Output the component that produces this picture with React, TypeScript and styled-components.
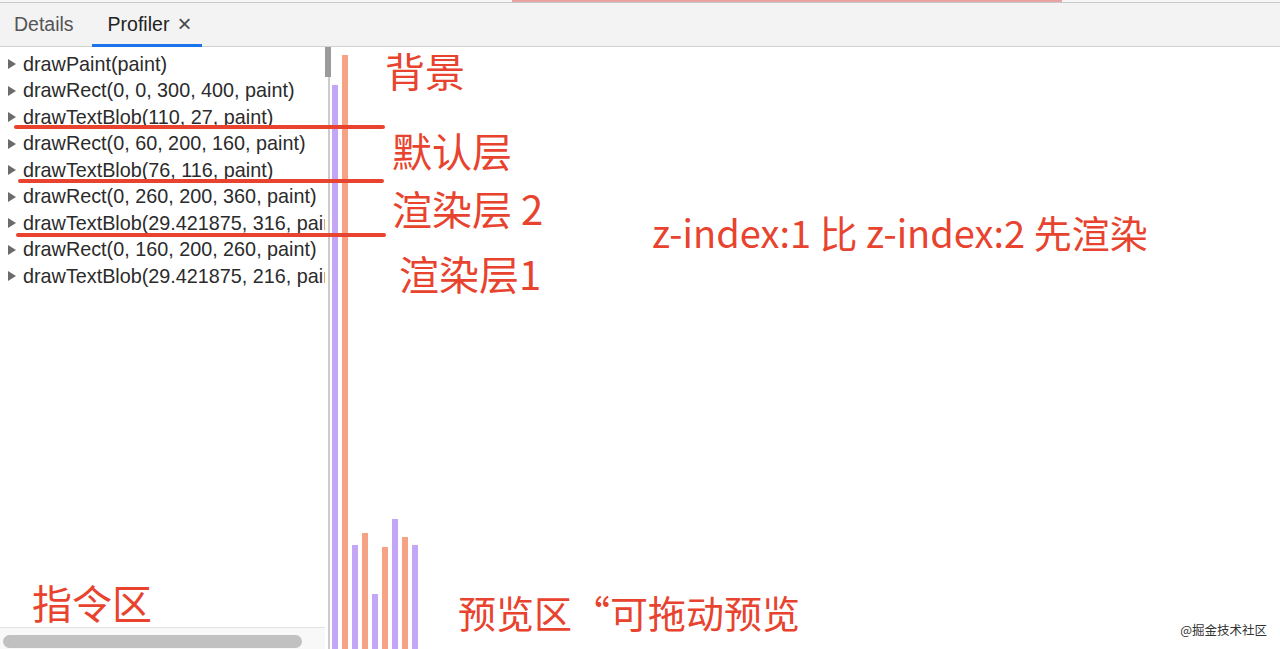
import React from 'react';
import { styled, createGlobalStyle } from 'styled-components';

const GlobalStyle = createGlobalStyle`
  html, body {
    margin: 0;
    padding: 0;
    background: #ffffff;
    overflow: hidden;
  }
  body {
    font-family: 'Liberation Sans', Arial, sans-serif;
  }
`;

const Page = styled.div`
  position: relative;
  width: 1280px;
  height: 649px;
  display: flex;
  flex-direction: column;
  overflow: hidden;
  background: #ffffff;
`;

const TopStrip = styled.div`
  height: 2px;
  display: flex;
  background: #f6f6f6;
  border-bottom: 1px solid #c8c8c8;
  padding-left: 512px;
`;

const TopStripAccent = styled.div`
  width: 550px;
  background: #e9a3a3;
`;

const TabBar = styled.div`
  height: 43px;
  display: flex;
  align-items: stretch;
  background: #f3f3f3;
  border-bottom: 1px solid #cfd1d4;
`;

const Tab = styled.div<{ $active?: boolean }>`
  display: flex;
  align-items: center;
  gap: 8px;
  padding-top: 2px;
  padding-left: ${(p) => (p.$active ? '16px' : '14px')};
  padding-right: ${(p) => (p.$active ? '11px' : '18px')};
  font-size: 19.5px;
  color: ${(p) => (p.$active ? '#222' : '#555')};
  border-bottom: 3px solid ${(p) => (p.$active ? '#1a73e8' : 'transparent')};
  margin-bottom: -1px;
`;

const Close = styled.span`
  font-size: 24px;
  color: #4a4a4a;
  line-height: 1;
  margin-top: -2px;
`;

const Body = styled.div`
  flex: 1;
  display: flex;
  min-height: 0;
`;

const LeftPanel = styled.div`
  width: 325px;
  display: flex;
  flex-direction: column;
  overflow: hidden;
`;

const CommandList = styled.div`
  flex: 1;
  padding-top: 4px;
  overflow: hidden;
`;

const Row = styled.div`
  height: 26.5px;
  display: flex;
  align-items: center;
  white-space: nowrap;
  overflow: hidden;
  font-size: 19.8px;
  color: #2b2b2b;
`;

const Caret = styled.span`
  width: 0;
  height: 0;
  margin: 0 7px 0 8px;
  border-top: 5.5px solid transparent;
  border-bottom: 5.5px solid transparent;
  border-left: 8px solid #6b6b6b;
  flex-shrink: 0;
`;

const HScroll = styled.div`
  height: 20px;
  border-top: 1px solid #e3e3e3;
  background: #f8f8f8;
  display: flex;
  align-items: flex-end;
  padding: 0 0 1px 3px;
`;

const HThumb = styled.div`
  width: 299px;
  height: 13px;
  border-radius: 7px;
  background: #c1c1c1;
`;

const VScroll = styled.div`
  width: 7px;
  display: flex;
  flex-direction: column;
  align-items: flex-start;
`;

const VThumb = styled.div`
  width: 6px;
  height: 30px;
  background: #9b9b9b;
`;

const VTrack = styled.div`
  flex: 1;
  width: 2px;
  margin-left: 3px;
  background: #cccccc;
`;

const Preview = styled.div`
  flex: 1;
  display: flex;
  align-items: flex-end;
  gap: 4px;
`;

const Bar = styled.div<{ $kind: 'a' | 'b' }>`
  width: 6px;
  background: ${(p) => (p.$kind === 'a' ? '#c4a6f6' : '#f5a384')};
`;

const Note = styled.div<{ $x: number; $y: number; $size?: number }>`
  position: absolute;
  left: ${(p) => p.$x}px;
  top: ${(p) => p.$y}px;
  font-family: 'Noto Sans CJK SC', 'Noto Sans', sans-serif;
  font-size: ${(p) => p.$size ?? 40}px;
  line-height: 1;
  color: #e8432e;
  white-space: nowrap;
`;

const Mark = styled.div<{ $x: number; $y: number; $w: number }>`
  position: absolute;
  left: ${(p) => p.$x}px;
  top: ${(p) => p.$y}px;
  width: ${(p) => p.$w}px;
  height: 4px;
  border-radius: 2px;
  background: #e8432e;
`;

const Watermark = styled.div`
  position: absolute;
  right: 13px;
  bottom: 10px;
  font-family: 'Noto Sans CJK SC', sans-serif;
  font-size: 12.5px;
  color: #333;
`;

const commands = [
  'drawPaint(paint)',
  'drawRect(0, 0, 300, 400, paint)',
  'drawTextBlob(110, 27, paint)',
  'drawRect(0, 60, 200, 160, paint)',
  'drawTextBlob(76, 116, paint)',
  'drawRect(0, 260, 200, 360, paint)',
  'drawTextBlob(29.421875, 316, paint)',
  'drawRect(0, 160, 200, 260, paint)',
  'drawTextBlob(29.421875, 216, paint)',
];

const bars: { kind: 'a' | 'b'; height: number }[] = [
  { kind: 'a', height: 564 },
  { kind: 'b', height: 594 },
  { kind: 'a', height: 104 },
  { kind: 'b', height: 116 },
  { kind: 'a', height: 55 },
  { kind: 'b', height: 102 },
  { kind: 'a', height: 130 },
  { kind: 'b', height: 112 },
  { kind: 'a', height: 104 },
];

export default function App() {
  return (
    <Page>
      <GlobalStyle />
      <TopStrip>
        <TopStripAccent />
      </TopStrip>
      <TabBar>
        <Tab>Details</Tab>
        <Tab $active>
          Profiler <Close>×</Close>
        </Tab>
      </TabBar>
      <Body>
        <LeftPanel>
          <CommandList>
            {commands.map((c, i) => (
              <Row key={i}>
                <Caret />
                {c}
              </Row>
            ))}
          </CommandList>
          <HScroll>
            <HThumb />
          </HScroll>
        </LeftPanel>
        <VScroll>
          <VThumb />
          <VTrack />
        </VScroll>
        <Preview>
          {bars.map((b, i) => (
            <Bar key={i} $kind={b.kind} style={{ height: b.height }} />
          ))}
        </Preview>
      </Body>

      <Mark $x={14} $y={125} $w={371} />
      <Mark $x={18} $y={179} $w={366} />
      <Mark $x={16} $y={233} $w={370} />

      <Note $x={385} $y={50}>背景</Note>
      <Note $x={392} $y={130}>默认层</Note>
      <Note $x={392} $y={188}>渲染层 2</Note>
      <Note $x={399} $y={253}>渲染层1</Note>
      <Note $x={652} $y={213} $size={38}>z-index:1 比 z-index:2 先渲染</Note>
      <Note $x={32} $y={582}>指令区</Note>
      <Note $x={458} $y={593} $size={38}>预览区“可拖动预览</Note>
      <Watermark>@掘金技术社区</Watermark>
    </Page>
  );
}
